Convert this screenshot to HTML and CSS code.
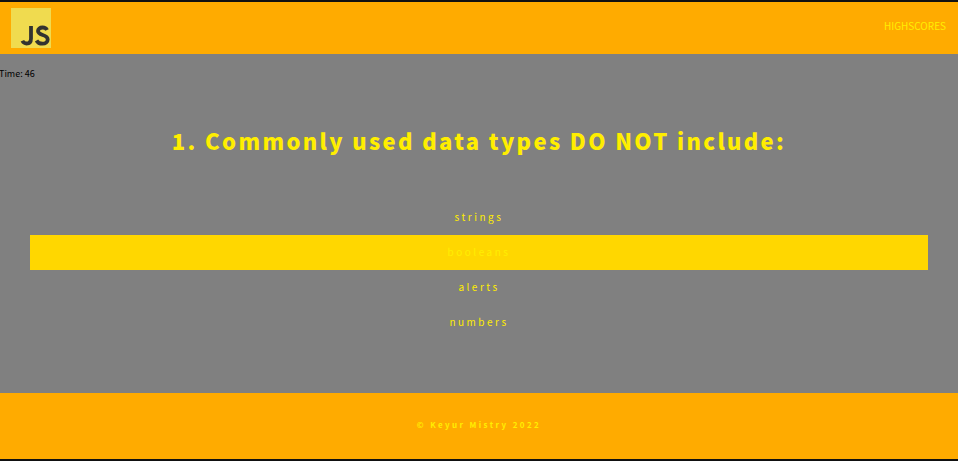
FILE: index.html
```html
<!DOCTYPE html>
<html lang="en">
<head>
<meta charset="utf-8">
<title>Code Quiz</title>
<link rel="stylesheet" href="styles.css">
</head>
<body>
<div class="page">
  <header class="top">
    <svg class="logo" viewBox="0 0 40 40" aria-label="JS logo">
      <rect width="40" height="40" fill="#f0db4f"/>
      <path d="M20 18v12.500c0 3.400-1.800 5-4.400 5-2 0-3.400-1-4.200-2.700" fill="none" stroke="#323330" stroke-width="3.800"/>
      <path d="M36 22c-.8-1.700-2.300-2.500-4.500-2.500-2.600 0-4.500 1.300-4.500 3.500 0 5 9.700 3 9.700 8.400 0 2.700-2.200 4.300-5.300 4.300-2.800 0-4.800-1.200-5.900-3.200" fill="none" stroke="#323330" stroke-width="3.800"/>
    </svg>
    <a class="scores" href="#">HIGHSCORES</a>
  </header>
  <main class="quiz">
    <p class="timer">Time: 46</p>
    <h1 class="question">1. Commonly used data types DO NOT include:</h1>
    <ul class="options">
      <li class="option">strings</li>
      <li class="option option-active">booleans</li>
      <li class="option">alerts</li>
      <li class="option">numbers</li>
    </ul>
  </main>
  <footer class="bottom">
    <p class="copy">© Keyur Mistry 2022</p>
  </footer>
</div>
</body>
</html>
```
FILE: styles.css
```css
* { box-sizing: border-box; }
html, body { margin: 0; padding: 0; }
body {
  height: 461px;
  overflow: hidden;
  font-family: "Noto Sans CJK SC", "Noto Sans", sans-serif;
}
.page {
  height: 461px;
  display: flex;
  flex-direction: column;
  border-top: 2px solid #111;
  border-bottom: 2px solid #111;
}
.top {
  height: 52px;
  flex: none;
  background: #ffab00;
  display: flex;
  align-items: flex-start;
  justify-content: space-between;
  padding: 6px 12px 0 11px;
}
.logo { width: 40px; height: 40px; display: block; }
.scores {
  color: #ffee00;
  font-size: 10px;
  line-height: 15px;
  margin-top: 10px;
  text-decoration: none;
}
.quiz {
  flex: 1;
  background: #808080;
  display: flex;
  flex-direction: column;
}
.timer {
  margin: 13px 0 0 -1px;
  font-size: 9px;
  line-height: 14px;
  color: #000;
}
.question {
  margin: 43px 0 0;
  text-align: center;
  color: #ffee00;
  font-size: 22px;
  line-height: 33px;
  font-weight: 900;
  letter-spacing: 2.34px;
}
.options {
  list-style: none;
  margin: 43px 30px 0;
  padding: 0;
}
.option {
  height: 35px;
  line-height: 33px;
  text-align: center;
  color: #ffee00;
  font-size: 10px;
  letter-spacing: 2.5px;
}
.option-active { background: #ffd700; }
.bottom {
  height: 66px;
  flex: none;
  background: #ffab00;
  padding-top: 26px;
}
.copy {
  margin: 0;
  text-align: center;
  color: #ffee00;
  font-size: 8px;
  line-height: 12px;
  font-weight: 700;
  letter-spacing: 2.4px;
}
```
